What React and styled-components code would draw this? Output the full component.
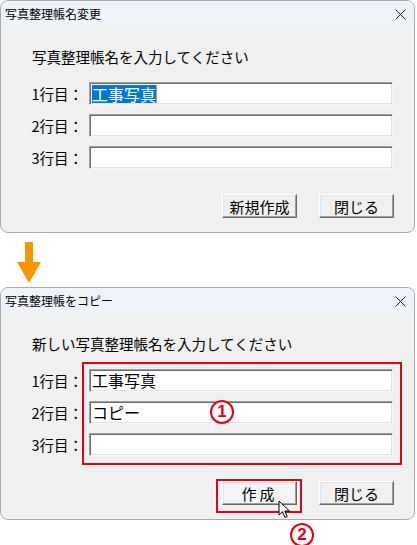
import React from 'react'
import styled, { createGlobalStyle } from 'styled-components'

const GlobalStyle = createGlobalStyle`
  body {
    margin: 0;
    background: #fff;
    font-family: "Noto Sans CJK JP", "Noto Sans", sans-serif;
    color: #000;
  }
`

const Page = styled.div`
  width: 417px;
  height: 545px;
  display: flex;
  flex-direction: column;
`

const Window = styled.div`
  width: 415px;
  box-sizing: border-box;
  border: 1px solid #ababab;
  border-radius: 8px;
  background: #f0f0f0;
`

const TitleBar = styled.div`
  height: 26px;
  background: #eef3fa;
  border-radius: 7px 7px 0 0;
  display: flex;
  align-items: center;
  justify-content: space-between;
  padding: 0 8px 0 4px;
  font-size: 12px;
  line-height: 1;
`

const Body = styled.div`
  position: relative;
  height: 205px;
  box-sizing: border-box;
  padding: 21px 20px 14px 0;
  display: flex;
  flex-direction: column;
`

const Prompt = styled.div`
  padding-left: 31px;
  font-size: 14.5px;
  line-height: 18px;
  height: 18px;
`

const Form = styled.div`
  position: relative;
  margin-top: 16px;
  display: grid;
  grid-template-columns: 82px 304px;
  column-gap: 6px;
  row-gap: 9px;
  align-items: center;
`

const Label = styled.div`
  text-align: right;
  font-size: 14.5px;
  line-height: 23px;
  white-space: nowrap;
`

const Field = styled.div`
  height: 23px;
  box-sizing: border-box;
  background: #fff;
  border-style: solid;
  border-width: 1px;
  border-color: #a0a0a0 #f6f6f6 #f6f6f6 #a0a0a0;
  box-shadow: inset 1px 1px 0 #6d6d6d, inset -1px -1px 0 #e3e3e3;
  padding: 0 0 0 2px;
  font-size: 16px;
  line-height: 21px;
  display: flex;
  align-items: center;
`

const Selected = styled.span`
  background: #0078d7;
  color: #fff;
  line-height: 18px;
  border-right: 1px solid #e8902a;
`

const Buttons = styled.div`
  position: relative;
  margin-top: auto;
  display: flex;
  justify-content: flex-end;
  gap: 22px;
`

const Button = styled.div`
  width: 75px;
  height: 24px;
  box-sizing: border-box;
  border-style: solid;
  border-width: 1px;
  border-color: #fff #696969 #696969 #fff;
  box-shadow: inset -1px -1px 0 #a0a0a0, inset 1px 1px 0 #e3e3e3;
  background: ${p => (p.$hover ? '#f4f4f4' : '#f0f0f0')};
  display: flex;
  align-items: center;
  justify-content: center;
  font-size: 15px;
  line-height: 1;
  letter-spacing: ${p => (p.$wide ? '3px' : '0')};
`

const ArrowRow = styled.div`
  height: 54px;
  padding: 9px 0 0 17px;
  box-sizing: border-box;
`

const Highlight = styled.div`
  position: absolute;
  top: ${p => p.$top}px;
  left: ${p => p.$left}px;
  width: ${p => p.$width}px;
  height: ${p => p.$height}px;
  box-sizing: border-box;
  border: 2px solid #e60012;
  outline: 1px solid #fff;
  pointer-events: none;
`

const Badge = styled.div`
  position: absolute;
  z-index: 2;
  top: ${p => p.$top}px;
  left: ${p => p.$left}px;
  width: 24px;
  height: 24px;
  box-sizing: border-box;
  border: 2px solid #e60012;
  border-radius: 50%;
  background: #fff;
  color: #e60012;
  font-family: "Liberation Sans", Arial, sans-serif;
  font-weight: bold;
  font-size: 17px;
  line-height: 20px;
  text-align: center;
`

const Cursor = styled.svg`
  position: absolute;
  top: ${p => p.$top}px;
  left: ${p => p.$left}px;
`

const CloseIcon = () => (
  <svg width='11' height='11' viewBox='0 0 11 11'>
    <path d='M0.5 0.5 L10.5 10.5 M10.5 0.5 L0.5 10.5' stroke='#1a1a1a' strokeWidth='1' />
  </svg>
)

const Dialog = ({ title, prompt, lines, createLabel, annotated }) => (
  <Window>
    <TitleBar>
      <span>{title}</span>
      <CloseIcon />
    </TitleBar>
    <Body>
      <Prompt>{prompt}</Prompt>
      <Form>
        {lines.map((line, i) => (
          <React.Fragment key={i}>
            <Label>{i + 1}行目：</Label>
            <Field>{line}</Field>
          </React.Fragment>
        ))}
        {annotated && <Highlight $top={-7} $left={81} $width={320} $height={103} />}
        {annotated && <Badge $top={31} $left={209}>1</Badge>}
      </Form>
      <Buttons>
        <Button $wide={createLabel.length < 3} $hover={annotated}>{createLabel}</Button>
        <Button>閉じる</Button>
        {annotated && <Highlight $top={-2} $left={215} $width={86} $height={34} />}
        {annotated && (
          <Cursor $top={19} $left={277} width='13' height='20' viewBox='0 0 13 20'>
            <path d='M1 1 L1 15 L4.5 11.8 L7 17.5 L9.2 16.5 L6.8 11 L11.5 11 Z' fill='#fff' stroke='#000' strokeWidth='1' strokeLinejoin='round' />
          </Cursor>
        )}
        {annotated && <Badge $top={42} $left={289}>2</Badge>}
      </Buttons>
    </Body>
  </Window>
)

const App = () => (
  <Page>
    <GlobalStyle />
    <Dialog
      title='写真整理帳名変更'
      prompt='写真整理帳名を入力してください'
      lines={[<Selected key='s'>工事写真</Selected>, '', '']}
      createLabel='新規作成'
    />
    <ArrowRow>
      <svg width='24' height='41' viewBox='0 0 24 41'>
        <path d='M8 0 H16 V20 H24 L12 41 L0 20 H8 Z' fill='#f39800' />
      </svg>
    </ArrowRow>
    <Dialog
      title='写真整理帳をコピー'
      prompt='新しい写真整理帳名を入力してください'
      lines={['工事写真', 'コピー', '']}
      createLabel='作成'
      annotated
    />
  </Page>
)

export default App
